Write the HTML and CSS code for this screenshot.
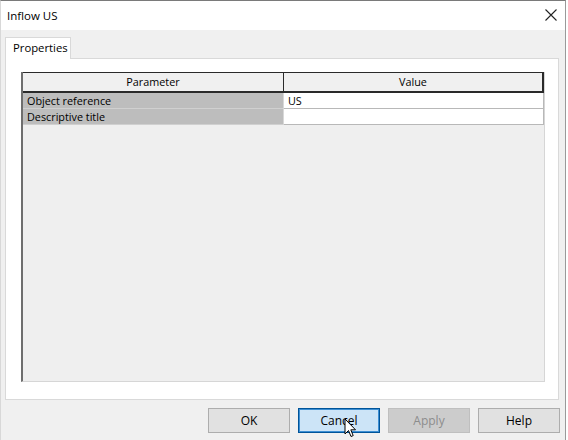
FILE: index.html
```html
<!DOCTYPE html>
<html>
<head>
<meta charset="utf-8">
<link rel="stylesheet" href="styles.css">
</head>
<body>
<div class="window">
  <div class="titlebar">
    <span class="title">Inflow US</span>
    <svg class="close" width="12" height="12" viewBox="0 0 12 12"><path d="M0.5 0.5 L11.5 11.5 M11.5 0.5 L0.5 11.5" stroke="#222" stroke-width="1.1" fill="none"/></svg>
  </div>
  <div class="body">
    <div class="tabs">
      <div class="tab">Properties</div>
    </div>
    <div class="panel">
      <div class="grid">
        <div class="row head">
          <div class="cell param">Parameter</div>
          <div class="cell value">Value</div>
        </div>
        <div class="row">
          <div class="cell param">Object reference</div>
          <div class="cell value">US</div>
        </div>
        <div class="row">
          <div class="cell param">Descriptive title</div>
          <div class="cell value"></div>
        </div>
      </div>
    </div>
    <div class="buttons">
      <button class="btn">OK</button>
      <button class="btn focus">Cancel</button>
      <button class="btn disabled">Apply</button>
      <button class="btn">Help</button>
    </div>
  </div>
  <svg class="cursor" width="13" height="20" viewBox="0 0 13 20"><path d="M1 1 L1 16 L4.5 12.5 L7 18.5 L9.2 17.6 L6.8 11.8 L11.5 11.8 Z" fill="#fff" stroke="#000" stroke-width="1" stroke-linejoin="miter"/></svg>
</div>
</body>
</html>
```

FILE: styles.css
```css
* { box-sizing: border-box; }
html, body { margin: 0; padding: 0; }
body {
  width: 568px;
  height: 440px;
  background: #ffffff;
  font-family: "Open Sans", "Noto Sans", "DejaVu Sans", sans-serif;
  font-size: 12px;
  color: #000;
  overflow: hidden;
}
.window {
  position: relative;
  width: 566px;
  height: 440px;
  border-top: 1px solid #7a7a7a;
  border-left: 1px solid #d8d8d8;
  border-right: 1px solid #9a9a9a;
  background: #f0f0f0;
  display: flex;
  flex-direction: column;
}
.titlebar {
  height: 29px;
  background: #ffffff;
  display: flex;
  align-items: center;
  justify-content: space-between;
  padding: 0 7px 1px 6px;
}
.title { font-size: 11.5px; }
.close { margin-right: 1px; }
.body {
  flex: 1;
  display: flex;
  flex-direction: column;
  padding: 7px 5px 0 4px;
}
.tabs { display: flex; height: 21px; }
.tab {
  width: 66px;
  height: 22px;
  background: #ffffff;
  border: 1px solid #d9d9d9;
  border-bottom: none;
  padding: 2px 0 0 7px;
  font-size: 11.3px;
  position: relative;
  z-index: 1;
}
.panel {
  width: 554px;
  height: 342px;
  background: #ffffff;
  border: 1px solid #d9d9d9;
  padding: 13px 14px 17px 15px;
  display: flex;
}
.grid {
  flex: 1;
  background: #efefef;
  border-left: 2px solid #6e6e6e;
  border-right: 1px solid #d6d6d6;
  border-bottom: 1px solid #d6d6d6;
  display: flex;
  flex-direction: column;
  align-items: flex-start;
}
.row { display: flex; width: 521px; height: 16px; }
.cell {
  font-size: 10.8px;
  line-height: 15px;
  padding-left: 4px;
  white-space: nowrap;
  overflow: hidden;
}
.cell.param { width: 261px; background: #bdbdbd; border-bottom: 1px solid #d0d0d0; border-right: 1px solid #d8d8d8; }
.cell.value { width: 260px; background: #ffffff; border-bottom: 1px solid #b8b8b8; border-right: 1px solid #b8b8b8; }
.row.head { height: 21px; }
.row.head .cell {
  background: #f0f0f0;
  text-align: center;
  padding-left: 0;
  line-height: 18px;
  border-top: 1px solid #2a2a2a;
  border-bottom: 2px solid #2a2a2a;
  border-right: 1px solid #2a2a2a;
}
.row.head .cell.value { border-right: 2px solid #2a2a2a; }
.buttons {
  display: flex;
  justify-content: flex-end;
  gap: 8px;
  padding: 8px 0 0 0;
}
.btn {
  width: 82px;
  height: 25px;
  font-family: inherit;
  font-size: 12px;
  color: #000;
  background: #e1e1e1;
  border: 1px solid #adadad;
  padding: 0;
  margin: 0;
}
.btn.focus { background: #cce4f7; border: 1px solid #005499; box-shadow: inset 0 0 0 1px #3d8fd4; }
.btn.disabled { background: #cccccc; border-color: #bfbfbf; color: #8d8d8d; }
.cursor { position: absolute; left: 343px; top: 417px; }
```
